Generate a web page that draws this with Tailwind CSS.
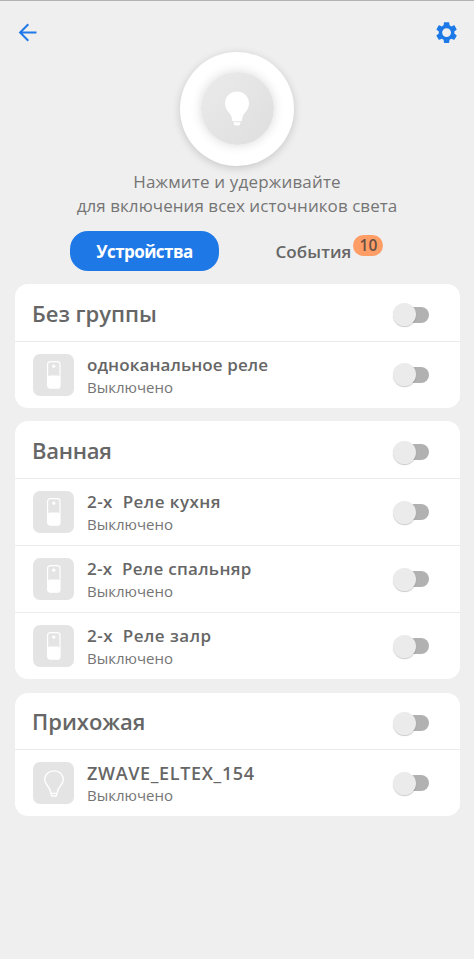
<!DOCTYPE html>
<html lang="ru">
<head>
<meta charset="utf-8">
<title>Свет</title>
<script src="https://cdn.jsdelivr.net/npm/@tailwindcss/browser@4"></script>
</head>
<body class="h-[959px] overflow-hidden bg-[#efefef] font-['Open_Sans','Noto_Sans',sans-serif] text-[#666] border-t border-[#b3b3b3]">
<svg class="hidden">
  <symbol id="relay" viewBox="0 0 14 28"><rect x=".6" y=".6" width="12.4" height="26.6" rx="2.8" fill="none" stroke="#fff" stroke-width="1.2"/><circle cx="6.8" cy="5.2" r="1.6" fill="#fff"/><path d="M.6 16.4Q.8 14.6 2.8 14.6H10.8Q12.8 14.6 13 16.4V24.6Q13 27.2 10.4 27.2H3.2Q.6 27.2 .6 24.6Z" fill="#fff"/></symbol>
</svg>
<header class="flex h-[50px] justify-between pl-[18px] pr-4 pt-[20px]">
  <svg class="mt-[2px] size-5" viewBox="0 0 20 20" fill="none" stroke="#2079e8" stroke-width="2"><path d="M18.5 9.5H2.5M10.3 1.3L2.1 9.5L10.3 17.7"/></svg>
  <svg class="-mt-[1.500px] -mr-[1.500px] size-[26px]" viewBox="0.400 0.400 24 24" fill="#1c79e7"><path d="M19.14 12.94c.04-.3.06-.61.06-.94 0-.32-.02-.64-.07-.94l2.03-1.58c.18-.14.23-.41.12-.61l-1.92-3.32c-.12-.22-.37-.29-.59-.22l-2.39.96c-.5-.38-1.03-.7-1.62-.94l-.36-2.54c-.04-.24-.24-.41-.48-.41h-3.84c-.24 0-.43.17-.47.41l-.36 2.54c-.59.24-1.13.57-1.62.94l-2.39-.96c-.22-.08-.47 0-.59.22L2.74 8.87c-.12.21-.08.47.12.61l2.03 1.58c-.05.3-.09.63-.09.94s.02.64.07.94l-2.03 1.58c-.18.14-.23.41-.12.61l1.92 3.32c.12.22.37.29.59.22l2.39-.96c.5.38 1.03.7 1.62.94l.36 2.54c.05.24.24.41.48.41h3.84c.24 0 .44-.17.47-.41l.36-2.54c.59-.24 1.13-.56 1.62-.94l2.39.96c.22.08.47 0 .59-.22l1.92-3.32c.12-.22.07-.47-.12-.61l-2.01-1.58zM12 16.1A4.1 4.1 0 1 1 12 7.900a4.100 4.100 0 0 1 0 8.200z"/></svg>
</header>
<div class="mx-auto mt-[.5px] flex size-[114px] items-center justify-center rounded-full bg-white shadow-[0_2px_9px_rgba(0,0,0,0.17)]">
  <div class="flex size-[73px] items-center justify-center rounded-full bg-linear-to-br from-[#ebebeb] to-[#dedede] shadow-[0_0_11px_rgba(0,0,0,0.15)]">
    <svg class="h-[35px] w-[25px]" viewBox="0.500 0 25 35" fill="#fff"><path d="M12.500 .5C19.400 .5 24.500 5.800 24.500 12.300C24.500 16.300 22.800 19.100 20.700 21.500C18.200 24.300 17.700 26.500 17.400 29.300Q17.300 30.300 16.500 30.300H8.600Q7.800 30.300 7.700 29.300C7.400 26.500 6.900 24.300 4.300 21.500C2.200 19.100 .5 16.300 .5 12.300C.5 5.800 5.600 .5 12.500 .5ZM9 31.300H16L15.600 33Q15.200 34.600 13.800 34.600H11.200Q9.800 34.600 9.400 33Z"/></svg>
  </div>
</div>
<div class="mt-[4.500px] text-center text-[17px] font-normal leading-6 text-[#757575]">
  <p class="tracking-[.17px]">Нажмите и удерживайте</p>
  <p class="tracking-[.05px]">для включения всех источников света</p>
</div>
<nav class="ml-[70px] mt-[13px] flex h-10 text-[17px]">
  <div class="flex w-[149px] items-center justify-center rounded-[18px] bg-[#1e79e7] font-bold text-white"><span class="mt-[2px] tracking-[-.55px]">Устройства</span></div>
  <div class="ml-[56.500px] flex items-start font-semibold"><span class="mt-[9px] leading-6 tracking-[.1px]">События</span><span class="ml-[2px] mt-[3.500px] flex h-[21.500px] w-[30px] items-center justify-center rounded-full bg-[#ff9d66] pt-px text-[15.500px] font-semibold text-[#665044]">10</span></div>
</nav>
<main class="ml-[14.500px] mt-[13px] flex w-[445.500px] flex-col gap-[13.500px]" id="groups"></main>
<script>
const toggle = '<div class="relative h-6 w-[36px] shrink-0"><i class="absolute right-0 top-1 h-4 w-[33px] rounded-full bg-[#b1b1b1]"></i><i class="absolute left-0 top-[.5px] size-[23px] rounded-full bg-[#ebebeb] shadow-[0_1px_1px_rgba(0,0,0,0.2)]"></i></div>';
const icons = {
  relay: '<svg class="h-7 w-3.5"><use href="#relay"/></svg>',
  bulb: '<svg class="h-[27px] w-5" viewBox="0 0 20 27" fill="none" stroke="#fff" stroke-width="1.300"><path d="M10 .8C4.800 .8 .7 4.600 .7 9.600C.7 12.400 1.800 14 3.600 16C5.700 18.300 6.400 20 6.900 22.800L7.300 25Q7.500 26 8.400 26H11.600Q12.500 26 12.700 25L13.100 22.800C13.600 20 14.300 18.300 16.400 16C18.200 14 19.300 12.400 19.300 9.600C19.300 4.600 15.200 .8 10 .8ZM7 23.300H13"/></svg>'
};
const data = [
  ['Без группы', '', [['одноканальное реле', 'tracking-[.1px]', 'relay']]],
  ['Ванная', 'tracking-[-.25px]', [['2-х  Реле кухня', 'tracking-[.46px]', 'relay'], ['2-х  Реле спальняр', 'tracking-[.3px]', 'relay'], ['2-х  Реле залр', 'tracking-[.48px]', 'relay']]],
  ['Прихожая', '', [['ZWAVE_ELTEX_154', 'text-[18px] tracking-[.65px]', 'bulb']]]
];
document.getElementById('groups').innerHTML = data.map(([name, sp, rows]) => `
<section class="overflow-hidden rounded-[13px] bg-white">
  <div class="flex h-[56.800px] items-center justify-between pl-[17.500px] pr-[31px] pt-[5px]"><h2 class="text-[22px] font-semibold leading-7 -mt-[4px] ${sp}">${name}</h2>${toggle}</div>
  ${rows.map(([t, s, ic]) => `<div class="flex h-[67px] items-center border-t border-[#ececec] pl-[18.500px] pr-[31px]">
    <div class="flex h-[42px] w-[41px] items-center justify-center rounded-[7px] bg-[#e4e4e4]">${icons[ic]}</div>
    <div class="ml-[13px] mt-[1px] flex-1"><p class="whitespace-pre font-semibold leading-6 ${s.includes('text-') ? '' : 'text-[17px]'} ${s}">${t}</p><p class="text-[15px] font-normal leading-[21px] text-[#757575]">Выключено</p></div>${toggle}</div>`).join('')}
</section>`).join('');
</script>
</body>
</html>
